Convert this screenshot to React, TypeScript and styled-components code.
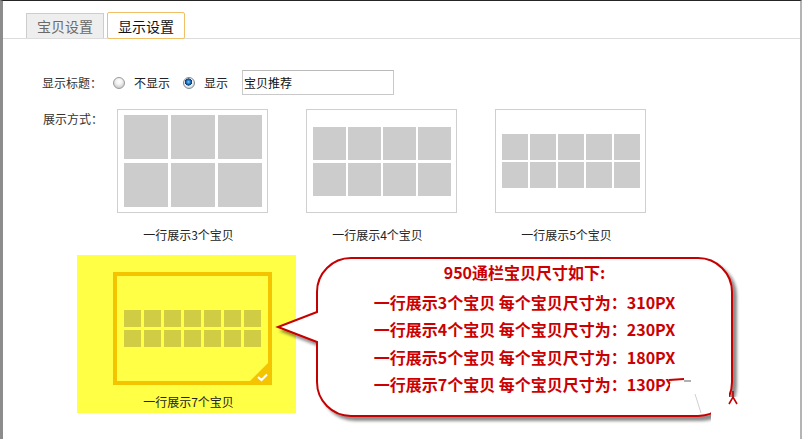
import React from "react";
import styled, { createGlobalStyle } from "styled-components";

const Global = createGlobalStyle`
  html, body { margin: 0; padding: 0; background: #fff; }
  body { font-family: "Noto Sans CJK SC", "Noto Sans", sans-serif; }
`;

const Frame = styled.div`
  position: relative;
  width: 802px;
  height: 439px;
  box-sizing: border-box;
  border-top: 1px solid #262626;
  border-left: 3px solid #8c8c8c;
  border-right: 2px solid #b4b4b4;
  background: #fff;
  overflow: hidden;
`;

const TabBar = styled.div`
  display: flex;
  align-items: flex-end;
  gap: 3px;
  height: 38px;
  box-sizing: border-box;
  padding-left: 23px;
  border-bottom: 1px solid #dcdcdc;
`;

const Tab = styled.div<{ $active?: boolean }>`
  width: 78px;
  box-sizing: border-box;
  height: ${(p) => (p.$active ? 27 : 25)}px;
  margin-bottom: ${(p) => (p.$active ? -1 : 0)}px;
  display: flex;
  align-items: center;
  justify-content: center;
  font-size: 14px;
  line-height: 16px;
  color: ${(p) => (p.$active ? "#111" : "#6a6a6a")};
  background: ${(p) => (p.$active ? "#fff" : "#eeeeee")};
  border: 1px solid ${(p) => (p.$active ? "#efc066" : "#cdcdcd")};
  border-bottom: ${(p) => (p.$active ? "1px solid #efc066" : "none")};
  border-radius: ${(p) => (p.$active ? "2px" : "0")};
`;

const Content = styled.div`
  padding: 31px 0 0 39px;
  font-size: 12px;
  color: #333;
`;

const TitleRow = styled.div`
  display: flex;
  align-items: center;
  height: 25px;
`;

const FieldLabel = styled.div<{ $w: number }>`
  width: ${(p) => p.$w}px;
  box-sizing: border-box;
  flex: none;
  font-size: 12px;
  line-height: 16px;
  color: #333;
`;

const RadioOption = styled.label<{ $mr: number }>`
  display: flex;
  align-items: center;
  gap: 9px;
  margin-right: ${(p) => p.$mr}px;
  font-size: 12px;
  line-height: 16px;
  color: #222;
`;

const RadioDot = styled.span<{ $checked?: boolean }>`
  width: 12px;
  height: 12px;
  box-sizing: border-box;
  border-radius: 50%;
  border: 1px solid ${(p) => (p.$checked ? "#7d8a96" : "#9a9a9a")};
  background: ${(p) =>
    p.$checked
      ? "radial-gradient(circle at 45% 40%, #8fd0ff 0, #2a86d6 1.5px, #0c4a8a 3px, #0a3a6e 3.4px, #f4f4f4 3.8px, #d8d8d8 6px)"
      : "radial-gradient(circle at 50% 35%, #ffffff 0, #f2f2f2 3px, #cfcfcf 6px)"};
  flex: none;
`;

const TextInput = styled.input`
  width: 152px;
  height: 25px;
  box-sizing: border-box;
  border: 1px solid #c9c9c9;
  border-top-color: #b9b9b9;
  padding: 0 0 0 1px;
  margin: 0;
  font-family: "Noto Sans CJK SC", "Noto Sans", sans-serif;
  font-size: 12px;
  color: #111;
  outline: none;
  background: #fff;
`;

const OptionsRow = styled.div`
  display: flex;
  margin-top: 14px;
`;

const OptionsLabel = styled(FieldLabel)`
  padding-top: 2px;
  padding-left: 1px;
`;

const Grid = styled.div`
  display: grid;
  grid-template-columns: repeat(3, 151px);
  column-gap: 38px;
  row-gap: 12px;
`;

const Item = styled.div`
  display: flex;
  flex-direction: column;
  align-items: flex-start;
`;

const Thumb = styled.div`
  width: 151px;
  height: 104px;
  box-sizing: border-box;
  border: 1px solid #cfcfcf;
  background: #fff;
  display: flex;
  align-items: center;
  justify-content: center;
`;

const Cells = styled.div<{ $cols: number; $w: number; $h: number; $cg: number; $rg: number }>`
  display: grid;
  grid-template-columns: repeat(${(p) => p.$cols}, ${(p) => p.$w}px);
  grid-auto-rows: ${(p) => p.$h}px;
  column-gap: ${(p) => p.$cg}px;
  row-gap: ${(p) => p.$rg}px;
`;

const Cell = styled.div<{ $sel?: boolean }>`
  background: ${(p) => (p.$sel ? "#d0cc44" : "#cccccc")};
`;

const ItemLabel = styled.div<{ $w: number; $mt: number }>`
  width: ${(p) => p.$w}px;
  box-sizing: border-box;
  padding-right: 8px;
  margin-top: ${(p) => p.$mt}px;
  text-align: center;
  font-size: 12px;
  line-height: 16px;
  color: #222;
`;

const Highlight = styled.div`
  grid-column: 1;
  margin-left: -40px;
  width: 219px;
  height: 158px;
  box-sizing: border-box;
  padding: 17px 0 0 36px;
  background: #ffff45;
  display: flex;
  flex-direction: column;
  align-items: flex-start;
`;

const SelectedThumb = styled.div`
  position: relative;
  width: 159px;
  height: 113px;
  box-sizing: border-box;
  border: 4px solid #f5c400;
  display: flex;
  align-items: center;
  justify-content: center;
`;

const CornerBadge = styled.svg`
  position: absolute;
  right: -4px;
  bottom: -4px;
  width: 26px;
  height: 26px;
`;

const Callout = styled.div`
  position: absolute;
  left: 275px;
  top: 254px;
  width: 480px;
  height: 180px;
`;

const BubbleArt = styled.svg`
  position: absolute;
  left: 0;
  top: 0;
  width: 480px;
  height: 180px;
  overflow: visible;
`;

const CalloutText = styled.div`
  position: relative;
  margin-left: 39px;
  width: 415px;
  padding-top: 4px;
  text-align: center;
  color: #cc0000;
  font-weight: 700;
  font-size: 16px;
  line-height: 27.5px;
  white-space: nowrap;
`;

const CalloutTitle = styled.div`
  margin-bottom: 2px;
`;

const Smudge = styled.svg`
  position: absolute;
  left: 0;
  top: 0;
  width: 480px;
  height: 180px;
  overflow: visible;
`;

type Layout = { cols: number; w: number; h: number; cg: number; rg: number; label: string };

const layouts: Layout[] = [
  { cols: 3, w: 44, h: 44, cg: 3, rg: 4, label: "一行展示3个宝贝" },
  { cols: 4, w: 33, h: 33, cg: 2, rg: 3, label: "一行展示4个宝贝" },
  { cols: 5, w: 26, h: 26, cg: 2, rg: 2, label: "一行展示5个宝贝" },
];

const lines = [
  "一行展示3个宝贝 每个宝贝尺寸为：310PX",
  "一行展示4个宝贝 每个宝贝尺寸为：230PX",
  "一行展示5个宝贝 每个宝贝尺寸为：180PX",
  "一行展示7个宝贝 每个宝贝尺寸为：130PX",
];

const r = 34;
const L = 39, R = 454, T = 3, B = 161;
const bubblePath = `M ${L + r} ${T} H ${R - r} A ${r} ${r} 0 0 1 ${R} ${T + r} V ${B - r} A ${r} ${r} 0 0 1 ${R - r} ${B} H ${L + r} A ${r} ${r} 0 0 1 ${L} ${B - r} V 87 L 0 72 L ${L} 57 V ${T + r} A ${r} ${r} 0 0 1 ${L + r} ${T} Z`;

export default function App() {
  return (
    <>
      <Global />
      <Frame>
        <TabBar>
          <Tab>宝贝设置</Tab>
          <Tab $active>显示设置</Tab>
        </TabBar>
        <Content>
          <TitleRow>
            <FieldLabel $w={71}>显示标题：</FieldLabel>
            <RadioOption $mr={13}>
              <RadioDot />
              不显示
            </RadioOption>
            <RadioOption $mr={14}>
              <RadioDot $checked />
              显示
            </RadioOption>
            <TextInput defaultValue="宝贝推荐" readOnly />
          </TitleRow>
          <OptionsRow>
            <OptionsLabel $w={75}>展示方式：</OptionsLabel>
            <Grid>
              {layouts.map((l) => (
                <Item key={l.label}>
                  <Thumb>
                    <Cells $cols={l.cols} $w={l.w} $h={l.h} $cg={l.cg} $rg={l.rg}>
                      {Array.from({ length: l.cols * 2 }).map((_, i) => (
                        <Cell key={i} />
                      ))}
                    </Cells>
                  </Thumb>
                  <ItemLabel $w={151} $mt={14}>{l.label}</ItemLabel>
                </Item>
              ))}
              <Highlight>
                <SelectedThumb>
                  <Cells $cols={7} $w={17} $h={17} $cg={3} $rg={3}>
                    {Array.from({ length: 14 }).map((_, i) => (
                      <Cell key={i} $sel />
                    ))}
                  </Cells>
                  <CornerBadge viewBox="0 0 26 26">
                    <polygon points="26,0 26,26 0,26" fill="#f5c400" />
                    <path d="M12 18 L15.5 21 L21 15.5" stroke="#fff" strokeWidth="2.2" fill="none" />
                  </CornerBadge>
                </SelectedThumb>
                <ItemLabel $w={159} $mt={9}>一行展示7个宝贝</ItemLabel>
              </Highlight>
            </Grid>
          </OptionsRow>
        </Content>
        <Callout>
          <BubbleArt viewBox="0 0 480 180">
            <defs>
              <filter id="bshadow" x="-10%" y="-10%" width="130%" height="140%">
                <feDropShadow dx="4" dy="4" stdDeviation="1.8" floodColor="#000" floodOpacity="0.45" />
              </filter>
            </defs>
            <path d={bubblePath} fill="#fff" stroke="#c40000" strokeWidth="2" filter="url(#bshadow)" />
          </BubbleArt>
          <CalloutText>
            <CalloutTitle>950通栏宝贝尺寸如下:</CalloutTitle>
            {lines.map((t) => (
              <div key={t}>{t}</div>
            ))}
          </CalloutText>
          <Smudge viewBox="0 0 480 180">
            <polygon
              points="396,120 451,122 451,142 470,142 470,178 433,178 433,157 392,157 392,129"
              fill="#fff"
            />
            <path d="M391 125 L406 124" stroke="#c40000" strokeWidth="2.2" />
            <path d="M406 126 L413 126" stroke="#b0b0b0" strokeWidth="2" />
            <path d="M417 139 L423 158" stroke="#d0d0d0" strokeWidth="1" />
            <path d="M451 149 L455 142 L459 149 M455 142 V136" stroke="#c40000" strokeWidth="1.6" fill="none" />
          </Smudge>
        </Callout>
      </Frame>
    </>
  );
}
